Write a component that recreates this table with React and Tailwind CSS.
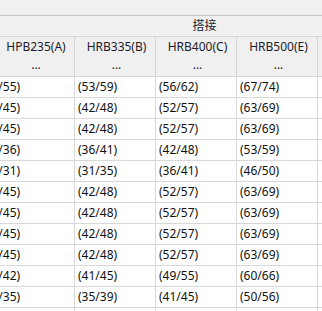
const rows = [
  ['(50/55)', '(53/59)', '(56/62)', '(67/74)', '(80/88)'],
  ['(41/45)', '(42/48)', '(52/57)', '(63/69)', '(76/83)'],
  ['(41/45)', '(42/48)', '(52/57)', '(63/69)', '(76/83)'],
  ['(33/36)', '(36/41)', '(42/48)', '(53/59)', '(64/70)'],
  ['(28/31)', '(31/35)', '(36/41)', '(46/50)', '(55/60)'],
  ['(41/45)', '(42/48)', '(52/57)', '(63/69)', '(76/83)'],
  ['(41/45)', '(42/48)', '(52/57)', '(63/69)', '(76/83)'],
  ['(41/45)', '(42/48)', '(52/57)', '(63/69)', '(76/83)'],
  ['(41/45)', '(42/48)', '(52/57)', '(63/69)', '(76/83)'],
  ['(38/42)', '(41/45)', '(49/55)', '(60/66)', '(72/79)'],
  ['(32/35)', '(35/39)', '(41/45)', '(50/56)', '(60/67)'],
  ['(32/35)', '(35/39)', '(41/45)', '(50/56)', '(60/67)'],
];

const headers = ['HPB235(A)', 'HRB335(B)', 'HRB400(C)', 'HRB500(E)'];

export default function App() {
  return (
    <div className="w-[322px] h-[311px] overflow-hidden bg-white font-['Noto_Sans','Noto_Sans_CJK_SC',sans-serif] text-[12px] text-[#111]">
      <div className="-ml-[25px] w-[420px]">
        {/* top band */}
        <div className="h-[16px] bg-[#f0f0f0] border-b border-[#c9c9c9]" />

        {/* group header */}
        <div className="flex h-[21px] bg-[#f0f0f0] border-b border-[#d5d5d5]">
          <div className="w-[100px] shrink-0" />
          <div className="w-[259px] shrink-0 text-center leading-[20px] text-[#1c1c2a]">搭接</div>
        </div>

        {/* column headers */}
        <div className="flex h-[40px] bg-[#f0f0f0] border-b border-[#d5d5d5] text-[#1c1c2a]">
          {headers.map((h, i) => (
            <div
              key={h}
              className={
                (i === 0 ? 'w-[100px] pl-[23px]' : 'w-[81px] pl-[3px]') +
                ' shrink-0 border-r border-[#d5d5d5] text-center pt-[1px] leading-[18px]'
              }
            >
              <div>{h}</div>
              <div>...</div>
            </div>
          ))}
          <div className="flex-1" />
        </div>

        {/* data */}
        {rows.map((r, ri) => (
          <div key={ri} className="flex h-[21px] border-b border-[#d8d8d8]">
            {r.map((v, ci) => (
              <div
                key={ci}
                className={
                  (ci === 0 ? 'w-[100px] pl-[6px]' : ci === 4 ? 'w-[80px] pl-[4px] text-[#c8b400]' : 'w-[81px] pl-[3px]') +
                  (ci < 4 ? ' border-r border-[#d8d8d8]' : '') +
                  ' shrink-0 leading-[20px] whitespace-nowrap'
                }
              >
                {v}
              </div>
            ))}
          </div>
        ))}
      </div>
    </div>
  );
}
